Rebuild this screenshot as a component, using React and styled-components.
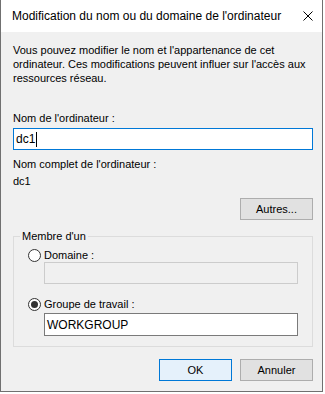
import React from "react";
import styled, { createGlobalStyle } from "styled-components";

const GlobalStyle = createGlobalStyle`
  html, body {
    margin: 0;
    padding: 0;
    background: #ffffff;
  }
  body {
    font-family: "Liberation Sans", Arial, sans-serif;
    font-size: 11px;
    color: #000000;
  }
`;

const Window = styled.div`
  width: 321px;
  height: 391px;
  border-left: 1px solid #707070;
  border-right: 1px solid #707070;
  border-bottom: 1px solid #707070;
  background: #f0f0f0;
  display: flex;
  flex-direction: column;
`;

const TitleBar = styled.div`
  height: 32px;
  flex: none;
  background: #ffffff;
  display: flex;
  align-items: center;
  justify-content: space-between;
  padding: 0 8px 0 11px;
  font-size: 12px;
`;

const CloseButton = styled.div`
  width: 12px;
  height: 12px;
  display: flex;
  align-items: center;
  justify-content: center;
`;

const Body = styled.div`
  display: flex;
  flex-direction: column;
  padding: 11px 9px 0 12px;
`;

const Paragraph = styled.p`
  margin: 0;
  line-height: 14px;
  white-space: nowrap;
`;

const Label = styled.div`
  line-height: 14px;
  margin-top: ${(p) => p.$top || 0}px;
`;

const TextField = styled.div`
  box-sizing: border-box;
  height: ${(p) => p.$height || 22}px;
  width: ${(p) => (p.$width ? `${p.$width}px` : "100%")};
  margin-top: ${(p) => p.$top || 0}px;
  margin-left: ${(p) => p.$left || 0}px;
  border: 1px solid ${(p) => (p.$focused ? "#0078d7" : p.$disabled ? "#cccccc" : "#7a7a7a")};
  background: ${(p) => (p.$disabled ? "#f0f0f0" : "#ffffff")};
  display: flex;
  align-items: center;
  padding: 0 2px;
  font-size: 12px;
  line-height: 14px;
`;

const Caret = styled.span`
  display: inline-block;
  width: 1px;
  height: 15px;
  background: #000000;
  margin-left: 1px;
`;

const ButtonRow = styled.div`
  display: flex;
  justify-content: flex-end;
  gap: 8px;
  margin-top: ${(p) => p.$top || 0}px;
`;

const Button = styled.div`
  box-sizing: border-box;
  width: 73px;
  height: 22px;
  display: flex;
  align-items: center;
  justify-content: center;
  border: 1px solid ${(p) => (p.$default ? "#0078d7" : "#adadad")};
  background: ${(p) => (p.$default ? "#e5f1fb" : "#e1e1e1")};
`;

const GroupBox = styled.fieldset`
  margin: 9px 0 0 0;
  padding: 5px 13px 10px 14px;
  border: 1px solid #dcdcdc;
  min-width: 0;
`;

const Legend = styled.legend`
  padding: 0 2px;
  margin-left: -8px;
  line-height: 14px;
`;

const RadioRow = styled.div`
  display: flex;
  align-items: center;
  gap: 3px;
  height: 14px;
  line-height: 14px;
  margin-top: ${(p) => p.$top || 0}px;
`;

const RadioCircle = styled.span`
  box-sizing: border-box;
  width: 13px;
  height: 13px;
  border-radius: 50%;
  border: 1px solid #333333;
  background: #ffffff;
  display: flex;
  align-items: center;
  justify-content: center;
  &::after {
    content: "";
    width: 7px;
    height: 7px;
    border-radius: 50%;
    background: ${(p) => (p.$checked ? "#333333" : "transparent")};
  }
`;

function Radio({ checked, label, top }) {
  return (
    <RadioRow $top={top}>
      <RadioCircle $checked={checked} />
      <span>{label}</span>
    </RadioRow>
  );
}

export default function App() {
  return (
    <>
      <GlobalStyle />
      <Window>
        <TitleBar>
          <span>Modification du nom ou du domaine de l'ordinateur</span>
          <CloseButton>
            <svg width="10" height="10" viewBox="0 0 10 10">
              <path d="M0.5 0.5 L9.5 9.5 M9.5 0.5 L0.5 9.5" stroke="#000" strokeWidth="1" fill="none" />
            </svg>
          </CloseButton>
        </TitleBar>
        <Body>
          <Paragraph>
            Vous pouvez modifier le nom et l'appartenance de cet
            <br />
            ordinateur. Ces modifications peuvent influer sur l'accès aux
            <br />
            ressources réseau.
          </Paragraph>
          <Label $top={26}>Nom de l'ordinateur :</Label>
          <TextField $focused $top={3} $height={22}>
            dc1
            <Caret />
          </TextField>
          <Label $top={7}>Nom complet de l'ordinateur :</Label>
          <Label $top={3}>dc1</Label>
          <ButtonRow $top={10}>
            <Button>Autres...</Button>
          </ButtonRow>
          <GroupBox>
            <Legend>Membre d'un</Legend>
            <Radio label="Domaine :" />
            <TextField $disabled $top={0} $left={16} $width={254} $height={22} />
            <Radio checked label="Groupe de travail :" top={13} />
            <TextField $top={2} $left={16} $width={254} $height={23}>
              WORKGROUP
            </TextField>
          </GroupBox>
          <ButtonRow $top={12}>
            <Button $default>OK</Button>
            <Button>Annuler</Button>
          </ButtonRow>
        </Body>
      </Window>
    </>
  );
}
